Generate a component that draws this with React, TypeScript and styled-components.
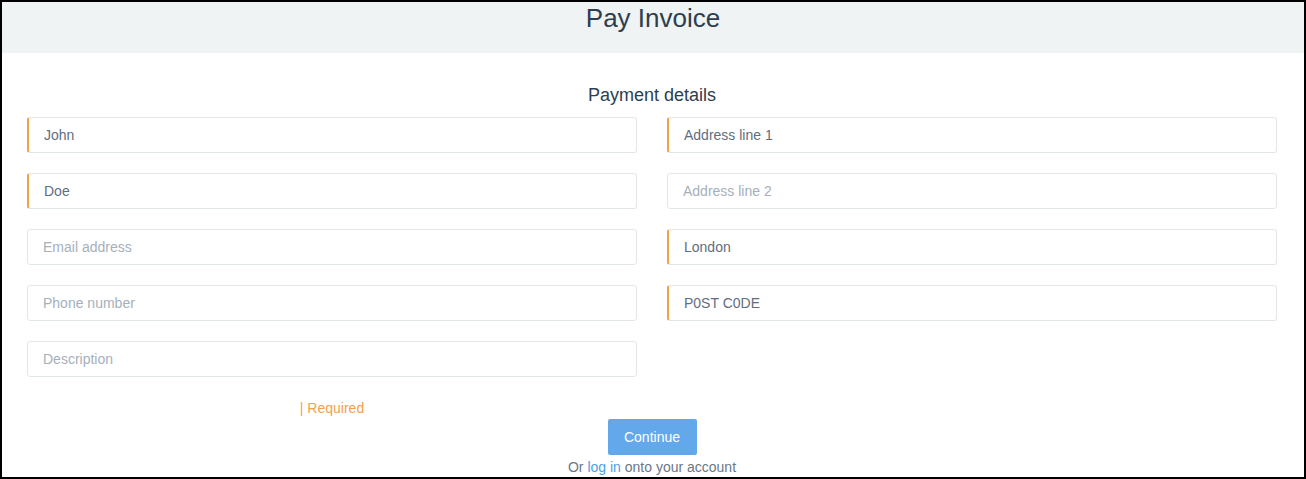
import styled, { createGlobalStyle } from "styled-components";

const GlobalStyle = createGlobalStyle`
  html, body {
    margin: 0;
    padding: 0;
    background: #fff;
  }
  body {
    font-family: "Liberation Sans", Arial, Helvetica, sans-serif;
  }
`;

const Page = styled.div`
  box-sizing: border-box;
  width: 100vw;
  height: 100vh;
  border: 2px solid #000;
  overflow: hidden;
  background: #fff;
  display: flex;
  flex-direction: column;
`;

const Header = styled.header`
  height: 51px;
  background: #eff3f4;
  text-align: center;
  flex-shrink: 0;
`;

const Title = styled.h1`
  margin: 0;
  padding-top: 2px;
  font-size: 26px;
  line-height: 28px;
  font-weight: 400;
  color: #2d3e4f;
`;

const Body = styled.section`
  padding: 32px 27px 0 25px;
  display: flex;
  flex-direction: column;
`;

const SectionTitle = styled.h2`
  margin: 0 0 12px;
  font-size: 18px;
  line-height: 20px;
  font-weight: 400;
  text-align: center;
  color: #2d3e4f;
`;

const Columns = styled.div`
  display: grid;
  grid-template-columns: 610px 610px;
  column-gap: 30px;
  align-items: start;
`;

const Stack = styled.div`
  display: flex;
  flex-direction: column;
  gap: 20px;
`;

const Field = styled.input<{ $required?: boolean }>`
  box-sizing: border-box;
  width: 100%;
  height: 36px;
  margin: 0;
  padding: 0 12px 0 15px;
  border: 1px solid #e1e6e8;
  border-left: ${(p) => (p.$required ? "2px solid #f2a04c" : "1px solid #e1e6e8")};
  border-radius: 3px;
  background: #fff;
  font-family: "Liberation Sans", Arial, Helvetica, sans-serif;
  font-size: 14px;
  color: #5f6e7f;
  outline: none;

  &::placeholder {
    color: #a6b0bb;
    opacity: 1;
  }
`;

const Hint = styled.div`
  margin-top: 21px;
  font-size: 14px;
  line-height: 20px;
  color: #f2a04c;
  text-align: center;
`;

const Actions = styled.div`
  display: flex;
  flex-direction: column;
  align-items: center;
`;

const Button = styled.button`
  width: 89px;
  height: 36px;
  margin-top: 1px;
  padding: 0;
  border: none;
  border-radius: 2px;
  background: #62a8ea;
  color: #fff;
  font-family: "Liberation Sans", Arial, Helvetica, sans-serif;
  font-size: 14px;
  cursor: pointer;
`;

const Note = styled.p`
  margin: 2px 0 0;
  font-size: 14px;
  line-height: 20px;
  color: #6a7786;
`;

const Link = styled.a`
  color: #4a9fe5;
  text-decoration: none;
`;

type FieldDef = { placeholder: string; value?: string; required?: boolean };

const personal: FieldDef[] = [
  { placeholder: "First name", value: "John", required: true },
  { placeholder: "Last name", value: "Doe", required: true },
  { placeholder: "Email address" },
  { placeholder: "Phone number" },
  { placeholder: "Description" },
];

const address: FieldDef[] = [
  { placeholder: "Address line 1", value: "Address line 1", required: true },
  { placeholder: "Address line 2" },
  { placeholder: "City", value: "London", required: true },
  { placeholder: "Post code", value: "P0ST C0DE", required: true },
];

function Fields({ items }: { items: FieldDef[] }) {
  return (
    <Stack>
      {items.map((f) => (
        <Field
          key={f.placeholder}
          placeholder={f.placeholder}
          defaultValue={f.value}
          $required={f.required}
        />
      ))}
    </Stack>
  );
}

export default function App() {
  return (
    <>
      <GlobalStyle />
      <Page>
        <Header>
          <Title>Pay Invoice</Title>
        </Header>
        <Body>
          <SectionTitle>Payment details</SectionTitle>
          <Columns>
            <div>
              <Fields items={personal} />
              <Hint>| Required</Hint>
            </div>
            <Fields items={address} />
          </Columns>
          <Actions>
            <Button type="button">Continue</Button>
            <Note>
              Or <Link href="#">log in</Link> onto your account
            </Note>
          </Actions>
        </Body>
      </Page>
    </>
  );
}
